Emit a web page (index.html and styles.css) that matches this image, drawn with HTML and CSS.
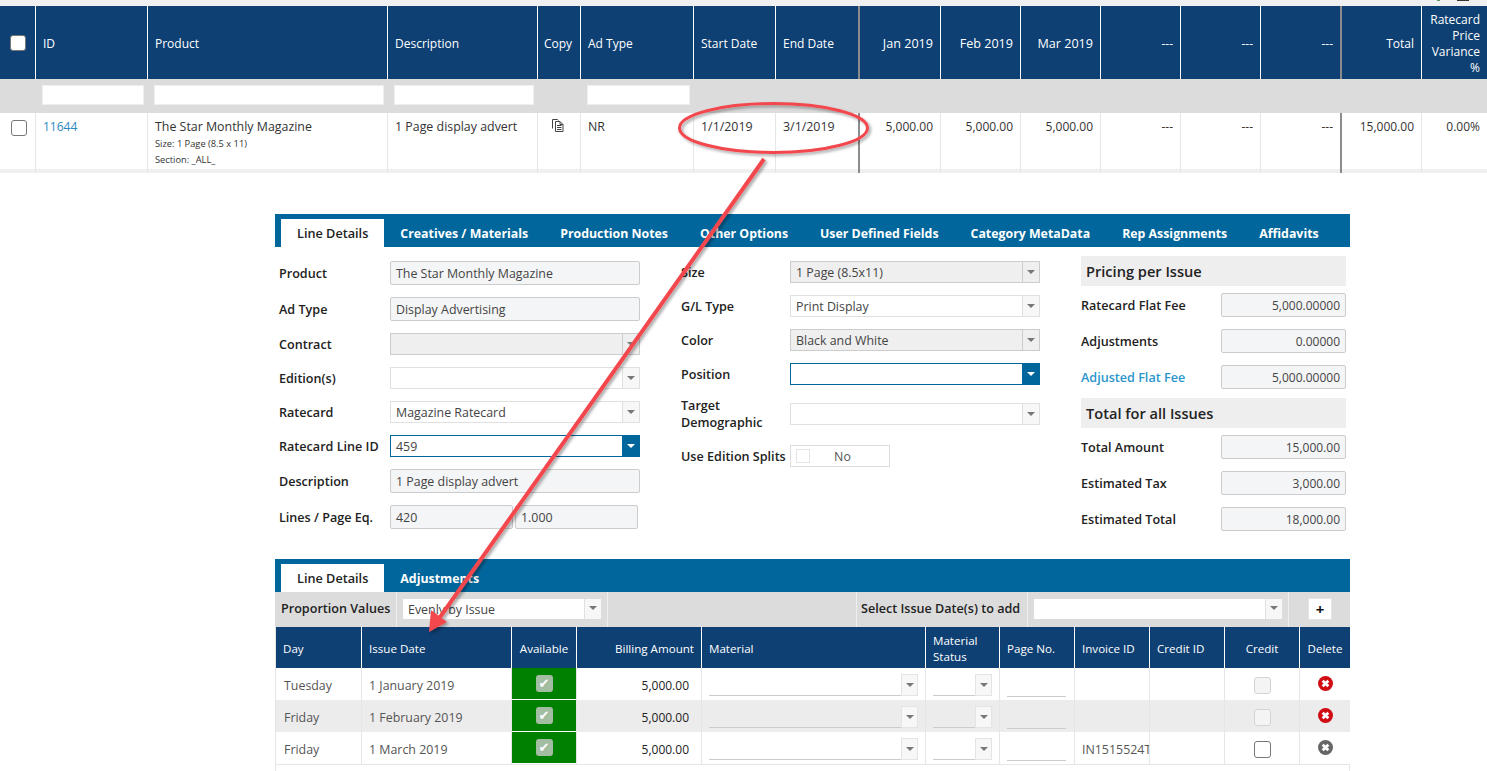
FILE: index.html
```html
<!DOCTYPE html>
<html lang="en">
<head>
    <meta charset="UTF-8">
    <meta name="viewport" content="width=device-width, initial-scale=1.0">
    <title>Order Line Details</title>
    <link rel="stylesheet" href="styles.css">
</head>
<body>
    <svg class="icon-defs" width="0" height="0">
        <symbol id="x-circle" viewBox="0 0 16 16">
            <circle cx="8" cy="8" r="8" fill="currentColor"/>
            <path d="M5 5l6 6M11 5l-6 6" stroke="#fff" stroke-width="3" fill="none"/>
        </symbol>
    </svg>

    <div class="top-strip">
        <span class="scrap scrap-green"></span>
        <span class="scrap scrap-dark"></span>
    </div>

    <table class="grid lines-grid">
        <colgroup>
            <col class="w36"><col class="w112"><col class="w240"><col class="w150"><col class="w43"><col class="w113"><col class="w82"><col class="w84">
            <col class="w81"><col class="w80"><col class="w80"><col class="w80"><col class="w80"><col class="w81"><col class="w80"><col class="w65">
        </colgroup>
        <thead>
            <tr class="head-row">
                <th><span class="check head-check"></span></th>
                <th>ID</th>
                <th>Product</th>
                <th>Description</th>
                <th class="copy-head">Copy</th>
                <th>Ad Type</th>
                <th>Start Date</th>
                <th class="thick">End Date</th>
                <th class="num month">Jan 2019</th>
                <th class="num month">Feb 2019</th>
                <th class="num month">Mar 2019</th>
                <th class="num">---</th>
                <th class="num">---</th>
                <th class="num thick">---</th>
                <th class="num">Total</th>
                <th class="num last">Ratecard Price Variance %</th>
            </tr>
            <tr class="filter-row">
                <td></td>
                <td><div class="filter-input"></div></td>
                <td><div class="filter-input"></div></td>
                <td><div class="filter-input"></div></td>
                <td></td>
                <td><div class="filter-input"></div></td>
                <td colspan="10"></td>
            </tr>
        </thead>
        <tbody>
            <tr class="data-row">
                <td><span class="check row-check"></span></td>
                <td class="plain-num"><a class="link">11644</a></td>
                <td>The Star Monthly Magazine
                    <div class="sub">Size: 1 Page (8.5 x 11)</div>
                    <div class="sub">Section: _ALL_</div>
                </td>
                <td>1 Page display advert</td>
                <td class="copy-cell">
                    <svg width="14" height="14" viewBox="0 0 14 14" fill="none" stroke="#444" stroke-width="1">
                        <path d="M1.5 10.5v-9h5l1 1"/>
                        <path d="M4.500 3.500h4.500l3 3v7h-7.500z" fill="#fff"/>
                        <path d="M6 7.500h4.500M6 9.500h4.500M6 11.500h4.500M9 3.500v3h3"/>
                    </svg>
                </td>
                <td>NR</td>
                <td>1/1/2019</td>
                <td class="thick">3/1/2019</td>
                <td class="num">5,000.00</td>
                <td class="num">5,000.00</td>
                <td class="num">5,000.00</td>
                <td class="num">---</td>
                <td class="num">---</td>
                <td class="num thick">---</td>
                <td class="num">15,000.00</td>
                <td class="num last">0.00%</td>
            </tr>
            <tr class="band-row">
                <td></td><td></td><td></td><td></td><td></td><td></td><td></td><td class="thick"></td>
                <td></td><td></td><td></td><td></td><td></td><td class="thick"></td><td></td><td class="last"></td>
            </tr>
        </tbody>
    </table>

    <section class="panel details-panel">
        <div class="tabs">
            <a class="tab active">Line Details</a>
            <a class="tab">Creatives / Materials</a>
            <a class="tab">Production Notes</a>
            <a class="tab">Other Options</a>
            <a class="tab">User Defined Fields</a>
            <a class="tab">Category MetaData</a>
            <a class="tab">Rep Assignments</a>
            <a class="tab">Affidavits</a>
        </div>
        <div class="form-cols">
            <div class="form-col col-left">
                <div class="form-row"><label>Product</label><div class="field tall readonly">The Star Monthly Magazine</div></div>
                <div class="form-row"><label>Ad Type</label><div class="field tall readonly">Display Advertising</div></div>
                <div class="form-row"><label>Contract</label><div class="field select disabled"><span class="value"></span><span class="arrow"></span></div></div>
                <div class="form-row"><label>Edition(s)</label><div class="field select"><span class="value"></span><span class="arrow"></span></div></div>
                <div class="form-row"><label>Ratecard</label><div class="field select"><span class="value">Magazine Ratecard</span><span class="arrow"></span></div></div>
                <div class="form-row"><label>Ratecard Line ID</label><div class="field select focused"><span class="value">459</span><span class="arrow"></span></div></div>
                <div class="form-row"><label>Description</label><div class="field tall readonly">1 Page display advert</div></div>
                <div class="form-row"><label>Lines / Page Eq.</label>
                    <div class="pair">
                        <div class="field tall readonly">420</div>
                        <div class="field tall readonly">1.000</div>
                    </div>
                </div>
            </div>
            <div class="form-col col-mid">
                <div class="form-row"><label>Size</label><div class="field select disabled"><span class="value">1 Page (8.5x11)</span><span class="arrow"></span></div></div>
                <div class="form-row"><label>G/L Type</label><div class="field select"><span class="value">Print Display</span><span class="arrow"></span></div></div>
                <div class="form-row"><label>Color</label><div class="field select disabled"><span class="value">Black and White</span><span class="arrow"></span></div></div>
                <div class="form-row"><label>Position</label><div class="field select focused"><span class="value"></span><span class="arrow"></span></div></div>
                <div class="form-row row-target"><label>Target Demographic</label><div class="field select"><span class="value"></span><span class="arrow"></span></div></div>
                <div class="form-row"><label>Use Edition Splits</label><div class="toggle"><span class="toggle-box"></span><span class="toggle-text">No</span></div></div>
            </div>
            <div class="form-col col-right">
                <h3 class="price-head">Pricing per Issue</h3>
                <div class="form-row"><label>Ratecard Flat Fee</label><div class="field tall readonly amount">5,000.00000</div></div>
                <div class="form-row"><label>Adjustments</label><div class="field tall readonly amount">0.00000</div></div>
                <div class="form-row row-last"><label class="link-label">Adjusted Flat Fee</label><div class="field tall readonly amount">5,000.00000</div></div>
                <h3 class="price-head">Total for all Issues</h3>
                <div class="form-row"><label>Total Amount</label><div class="field tall readonly amount">15,000.00</div></div>
                <div class="form-row"><label>Estimated Tax</label><div class="field tall readonly amount">3,000.00</div></div>
                <div class="form-row"><label>Estimated Total</label><div class="field tall readonly amount">18,000.00</div></div>
            </div>
        </div>
    </section>

    <section class="panel issues-panel">
        <div class="tabs">
            <a class="tab active">Line Details</a>
            <a class="tab">Adjustments</a>
        </div>
        <div class="toolbar">
            <div class="tool-label label-proportion">Proportion Values</div>
            <div class="tool-select select-proportion"><div class="field select plain"><span class="value">Evenly by Issue</span><span class="arrow"></span></div></div>
            <div class="tool-spacer"></div>
            <div class="tool-label label-dates">Select Issue Date(s) to add</div>
            <div class="tool-select select-dates"><div class="field select plain"><span class="value"></span><span class="arrow"></span></div></div>
            <div class="tool-add"><button class="add-btn">+</button></div>
        </div>
        <table class="grid issues-grid">
            <colgroup>
                <col class="w86"><col class="w150"><col class="w65"><col class="w125"><col class="w224"><col class="w74"><col class="w75"><col class="w75"><col class="w75"><col class="w75"><col class="w50">
            </colgroup>
            <thead>
                <tr class="head-row">
                    <th>Day</th>
                    <th>Issue Date</th>
                    <th class="center">Available</th>
                    <th class="num">Billing Amount</th>
                    <th>Material</th>
                    <th>Material Status</th>
                    <th>Page No.</th>
                    <th>Invoice ID</th>
                    <th>Credit ID</th>
                    <th class="center">Credit</th>
                    <th class="center last">Delete</th>
                </tr>
            </thead>
            <tbody>
                <tr>
                    <td>Tuesday</td>
                    <td>1 January 2019</td>
                    <td class="available"><span class="tick">&#10004;</span></td>
                    <td class="num bill">5,000.00</td>
                    <td class="pad-input"><div class="line-select"><span class="arrow"></span></div></td>
                    <td class="pad-input"><div class="line-select"><span class="arrow"></span></div></td>
                    <td class="pad-input"><div class="line-input"></div></td>
                    <td></td>
                    <td></td>
                    <td class="center"><span class="check check-off"></span></td>
                    <td class="center last"><svg class="del del-on"><use href="#x-circle"/></svg></td>
                </tr>
                <tr class="alt">
                    <td>Friday</td>
                    <td>1 February 2019</td>
                    <td class="available"><span class="tick">&#10004;</span></td>
                    <td class="num bill">5,000.00</td>
                    <td class="pad-input"><div class="line-select"><span class="arrow"></span></div></td>
                    <td class="pad-input"><div class="line-select"><span class="arrow"></span></div></td>
                    <td class="pad-input"><div class="line-input"></div></td>
                    <td></td>
                    <td></td>
                    <td class="center"><span class="check check-off"></span></td>
                    <td class="center last"><svg class="del del-on"><use href="#x-circle"/></svg></td>
                </tr>
                <tr>
                    <td>Friday</td>
                    <td>1 March 2019</td>
                    <td class="available"><span class="tick">&#10004;</span></td>
                    <td class="num bill">5,000.00</td>
                    <td class="pad-input"><div class="line-select"><span class="arrow"></span></div></td>
                    <td class="pad-input"><div class="line-select"><span class="arrow"></span></div></td>
                    <td class="pad-input"><div class="line-input"></div></td>
                    <td class="clip">IN1515524T</td>
                    <td></td>
                    <td class="center"><span class="check check-on"></span></td>
                    <td class="center last"><svg class="del del-off"><use href="#x-circle"/></svg></td>
                </tr>
            </tbody>
        </table>
        <div class="issues-foot"></div>
    </section>

    <!-- red markup drawn over the screenshot -->
    <svg class="markup" width="1487" height="771" viewBox="0 0 1487 771">
        <defs>
            <filter id="soft" x="-10%" y="-10%" width="120%" height="120%">
                <feDropShadow dx="2" dy="2" stdDeviation="1.500" flood-color="#000" flood-opacity="0.35"/>
            </filter>
        </defs>
        <g filter="url(#soft)">
            <ellipse cx="773.500" cy="128" rx="94" ry="24.500" fill="none" stroke="#f2474d" stroke-width="3"/>
            <path d="M764 159L438 620" stroke="#f2474d" stroke-width="4" fill="none"/>
            <path d="M429 632L431 610L447 622z" fill="#f2474d"/>
        </g>
    </svg>
</body>
</html>
```

FILE: styles.css
```css
html, body {
    margin: 0;
    height: 771px;
    overflow: hidden;
    background: #fff;
}
body {
    position: relative;
    font-family: "Open Sans", "Noto Sans", sans-serif;
    font-size: 12.4px;
    color: #333;
}
.icon-defs {
    position: absolute;
}
.top-strip {
    display: flex;
    align-items: flex-start;
    height: 6px;
    background: #f0f0f0;
}
.scrap {
    height: 1px;
}
.scrap-green {
    width: 3px;
    margin-left: 1437px;
    background: #5a9a6a;
}
.scrap-dark {
    width: 12px;
    margin-left: 17px;
    background: #333;
}

/* tables */
.grid {
    width: 100%;
    table-layout: fixed;
    border-collapse: separate;
    border-spacing: 0;
}
.w36 { width: 36px; }
.w43 { width: 43px; }
.w50 { width: 50px; }
.w65 { width: 65px; }
.w74 { width: 74px; }
.w75 { width: 75px; }
.w80 { width: 80px; }
.w81 { width: 81px; }
.w82 { width: 82px; }
.w84 { width: 84px; }
.w86 { width: 86px; }
.w112 { width: 112px; }
.w113 { width: 113px; }
.w125 { width: 125px; }
.w150 { width: 150px; }
.w224 { width: 224px; }
.w240 { width: 240px; }

.grid th {
    background: #0e4073;
    color: #fff;
    font-size: 12px;
    font-weight: 400;
    line-height: 16px;
    text-align: left;
    padding: 2px 7px 0;
    border-right: 1px solid #fff;
}
.grid td {
    padding: 0 7px;
    border-right: 1px solid #e6e6e6;
}
.grid .num {
    text-align: right;
    font-size: 12px;
}
.grid .center {
    text-align: center;
}
.grid .last {
    border-right: none;
}
.lines-grid .head-row {
    height: 73px;
}
.lines-grid .thick {
    border-right: 2px solid #8c8c8c;
}
.lines-grid .copy-head {
    padding: 2px 6px 0;
}
.lines-grid .month {
    font-size: 12.6px;
}
.filter-row td {
    height: 34px;
    background: #dcdcdc;
    border: none;
    padding: 6px 4px 8px 6px;
    box-sizing: border-box;
}
.filter-input {
    height: 20px;
    background: #fff;
    border: 1px solid #eee;
    box-sizing: border-box;
}
.data-row {
    height: 56px;
}
.data-row td {
    vertical-align: top;
    padding-top: 5px;
    line-height: 17px;
}
.plain-num {
    font-size: 12px;
}
.sub {
    font-size: 9.300px;
    line-height: 15px;
    margin-top: 1px;
}
.link {
    color: #2a8ac0;
}
.copy-cell {
    text-align: center;
}
.copy-cell svg {
    display: block;
    margin: 0 auto 0 6px;
}
.band-row td {
    height: 4px;
    padding: 0;
    background: #f0f0f0;
    font-size: 0;
    line-height: 0;
}

.check {
    display: block;
    width: 16px;
    height: 16px;
    box-sizing: border-box;
    border: 1.500px solid #777;
    border-radius: 3px;
    background: #fff;
}
.head-check {
    margin-left: 3px;
}
.lines-grid th:first-child {
    padding: 0 0 0 7px;
}
.lines-grid .data-row td:first-child {
    padding: 6px 0 0 7px;
}
.row-check {
    margin: 1px 0 0 4px;
}

/* panels */
.panel {
    margin-left: 275px;
    width: 1075px;
}
.details-panel {
    margin-top: 41px;
    height: 345px;
}
.tabs {
    display: flex;
    height: 33px;
    box-sizing: border-box;
    padding: 5px 0 0 6px;
    background: #01669b;
}
.tab {
    padding: 0 16px;
    font-size: 12.35px;
    line-height: 29px;
    font-weight: 700;
    color: #fff;
}
.tab.active {
    background: #fff;
    color: #222;
    font-size: 12.7px;
    font-weight: 600;
}

/* form */
.form-cols {
    display: flex;
}
.form-col {
    display: flex;
    flex-direction: column;
    gap: 12px;
    padding-top: 14px;
}
.col-left {
    width: 361px;
    padding-left: 4px;
    margin-right: 41px;
}
.col-mid {
    width: 359px;
    margin-right: 41px;
}
.col-right {
    width: 265px;
    padding-top: 9px;
    gap: 0;
}
.form-row {
    display: flex;
    align-items: center;
}
.form-row label {
    flex: 0 0 111px;
    width: 111px;
    font-size: 12.6px;
    font-weight: 600;
    color: #222;
    line-height: 17px;
    white-space: nowrap;
}
.col-mid .form-row label {
    flex-basis: 109px;
    width: 109px;
}
.row-target {
    margin: 0 0 2px;
}
.row-target label {
    white-space: normal;
}
.col-right .form-row {
    margin-top: 7px;
    margin-bottom: 5px;
}
.col-right .form-row label {
    flex-basis: 140px;
    width: 140px;
}
.col-right .row-last {
    margin-bottom: 9px;
}
.col-right .form-row + .form-row {
    margin-top: 7px;
}
.link-label {
    color: #2a96cc !important;
}
.price-head {
    margin: 0;
    height: 30px;
    line-height: 31px;
    padding-left: 5px;
    background: #eee;
    font-size: 14.600px;
    font-weight: 600;
    color: #222;
}

.field {
    flex: 1;
    height: 22px;
    box-sizing: border-box;
    border: 1px solid #e0e0e0;
    background: #fff;
    padding: 0 5px;
    line-height: 20px;
    color: #444;
    white-space: nowrap;
}
.field.tall {
    height: 24px;
    line-height: 24px;
}
.field.readonly {
    background: #f4f5f6;
    border-color: #ccc;
    border-radius: 2px;
}
.field.amount {
    text-align: right;
    font-size: 12px;
}
.field.select {
    display: flex;
    padding: 0;
}
.field .value {
    flex: 1;
    padding-left: 5px;
    line-height: 22px;
    overflow: hidden;
}
.arrow {
    position: relative;
    flex: 0 0 17px;
    width: 17px;
    border-left: 1px solid #e0e0e0;
    background: #f7f7f7;
    box-sizing: border-box;
}
.arrow::after {
    content: "";
    position: absolute;
    left: 4px;
    top: 8px;
    border-left: 4px solid transparent;
    border-right: 4px solid transparent;
    border-top: 4px solid #777;
}
.field.disabled {
    background: #efefef;
    border-color: #ccc;
}
.field.disabled .arrow {
    background: #efefef;
    border-left-color: #ccc;
}
.field.focused {
    border-color: #01669b;
}
.field.focused .arrow {
    background: #01669b;
    border-left-color: #01669b;
}
.field.focused .arrow::after {
    border-top-color: #fff;
}
.pair {
    flex: 1;
    display: flex;
    gap: 2px;
}
.pair .field {
    flex: 0 0 123px;
}
.toggle {
    display: flex;
    align-items: center;
    width: 100px;
    height: 22px;
    box-sizing: border-box;
    border: 1px solid #ddd;
    padding-left: 5px;
}
.toggle-box {
    width: 12px;
    height: 12px;
    border: 1px solid #e4e4e4;
}
.toggle-text {
    flex: 1;
    text-align: center;
    padding-right: 14px;
    color: #555;
}

/* toolbar above issues */
.toolbar {
    display: flex;
    height: 35px;
    background: #dcdcdc;
    padding-left: 1px;
    box-sizing: border-box;
}
.tool-label {
    box-sizing: border-box;
    font-size: 12.600px;
    line-height: 34px;
    font-weight: 600;
    color: #222;
    border-right: 1px solid #eee;
    white-space: nowrap;
}
.label-proportion {
    width: 121px;
    padding-left: 5px;
}
.tool-select {
    box-sizing: border-box;
    padding-top: 7px;
    border-right: 1px solid #eee;
}
.tool-select .field {
    border: none;
    height: 20px;
}
.tool-select .value {
    line-height: 22px;
}
.tool-select .arrow::after {
    top: 7px;
}
.select-proportion {
    width: 211px;
    padding-left: 6px;
    padding-right: 6px;
}
.tool-spacer {
    width: 248px;
    border-right: 1px solid #eee;
}
.label-dates {
    width: 171px;
    padding-left: 4px;
}
.select-dates {
    width: 261px;
    padding-left: 6px;
    padding-right: 6px;
}
.tool-add {
    flex: 1;
    padding: 6px 0 0 19px;
}
.add-btn {
    display: block;
    width: 24px;
    height: 22px;
    padding: 0;
    border: 1px solid #e4e4e4;
    background: #fff;
    color: #111;
    font: 700 15px/18px "Open Sans", sans-serif;
}

/* issues grid */
.issues-grid {
    border-left: 1px solid #e6e6e6;
    border-bottom: 1px solid #e6e6e6;
}
.issues-grid th,
.issues-grid th.num {
    font-size: 11.600px;
}
.issues-grid .head-row {
    height: 41px;
}
.issues-grid tbody tr {
    height: 32px;
}
.issues-grid td {
    padding-top: 2px;
    color: #555;
}
.issues-grid td:first-child {
    padding-left: 8px;
}
.issues-grid .alt td {
    background: #ececec;
}
.issues-grid .bill {
    color: #222;
    padding-right: 12px;
    padding-top: 3px;
}
.issues-grid .available,
.issues-grid .alt .available {
    background: #008000;
    border-bottom: 1px solid #fff;
    padding: 0;
}
.tick {
    display: block;
    width: 17px;
    height: 17px;
    margin: 0 auto;
    border-radius: 3px;
    background: #a2bda2;
    color: #fff;
    font: 400 13px/17px "DejaVu Sans", sans-serif;
    text-align: center;
}
.issues-grid .pad-input {
    vertical-align: top;
    padding-top: 0;
}
.line-select {
    display: flex;
    justify-content: flex-end;
    height: 22px;
    margin-top: 6px;
    box-sizing: border-box;
    border-bottom: 1px solid #ccc;
}
.line-select .arrow {
    border: 1px solid #e4e4e4;
    margin-bottom: -1px;
    height: 22px;
}
.line-input {
    height: 23px;
    margin-top: 6px;
    margin-right: 1px;
    box-sizing: border-box;
    border-bottom: 1px solid #ccc;
}
.clip {
    overflow: hidden;
    white-space: nowrap;
}
.check-off,
.check-on {
    width: 17px;
    height: 17px;
    margin: 0 auto;
}
.check-off {
    border-color: #d4d4d4;
    background: #f4f4f4;
}
.del {
    display: block;
    width: 15px;
    height: 15px;
    margin: -4px auto 0;
}
.del-on {
    color: #d00c14;
}
.del-off {
    color: #666;
}
.issues-foot {
    height: 10px;
    box-sizing: border-box;
    border-left: 1px solid #e6e6e6;
    border-right: 1px solid #e6e6e6;
}

.markup {
    position: absolute;
    left: 0;
    top: 0;
    pointer-events: none;
}
```
